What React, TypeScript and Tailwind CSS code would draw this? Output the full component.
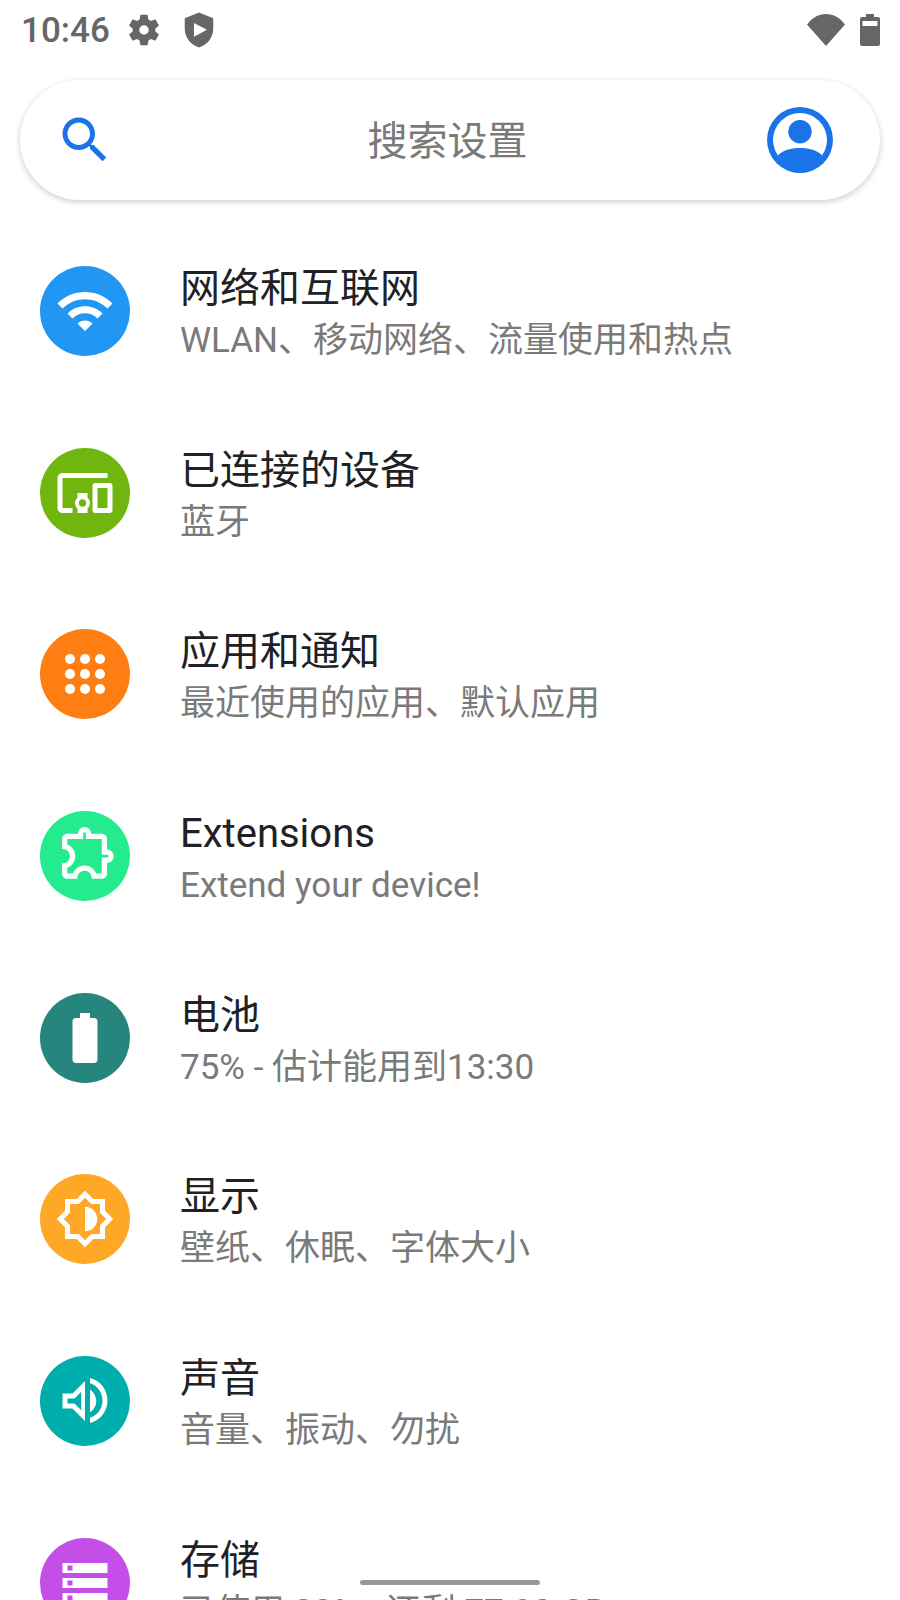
const FONT = "font-['Roboto','Noto_Sans_CJK_SC',sans-serif]";

const rows = [
  {
    title: '网络和互联网',
    sub: 'WLAN、移动网络、流量使用和热点',
    color: 'bg-[#2196f3]',
    icon: <path d="M1 9l2 2c4.97-4.97 13.03-4.97 18 0l2-2C16.93 2.93 7.08 2.93 1 9zm8 8l3 3 3-3c-1.65-1.66-4.34-1.66-6 0zm-4-4l2 2c2.76-2.76 7.24-2.76 10 0l2-2C15.14 9.14 8.87 9.14 5 13z" />,
  },
  {
    title: '已连接的设备',
    sub: '蓝牙',
    color: 'bg-[#70b60e]',
    icon: <path d="M3 6h18V4H3c-1.1 0-2 .9-2 2v12c0 1.1.9 2 2 2h4v-2H3V6zm10 6H9v1.78c-.61.55-1 1.33-1 2.22s.39 1.67 1 2.22V20h4v-1.78c.61-.55 1-1.34 1-2.22s-.39-1.67-1-2.22V12zm-2 5.5c-.83 0-1.5-.67-1.5-1.5s.67-1.5 1.5-1.5 1.5.67 1.5 1.5-.67 1.5-1.5 1.5zM22 8h-6c-.5 0-1 .5-1 1v10c0 .5.5 1 1 1h6c.5 0 1-.5 1-1V9c0-.5-.5-1-1-1zm-1 10h-4v-8h4v8z" />,
  },
  {
    title: '应用和通知',
    sub: '最近使用的应用、默认应用',
    color: 'bg-[#ff7e14]',
    icon: (
      <>
        {[6, 12, 18].map(y =>
          [6, 12, 18].map(x => <circle key={`${x}-${y}`} cx={x} cy={y} r="2" />)
        )}
      </>
    ),
  },
  {
    title: 'Extensions',
    sub: 'Extend your device!',
    color: 'bg-[#24ec8e]',
    icon: <path transform="translate(0.68 -2.25) scale(1.06)" d="M10.5 4.5c.28 0 .5.22.5.5v2h6v6h2c.28 0 .5.22.5.5s-.22.5-.5.5h-2v6h-2.12c-.68-1.75-2.39-3-4.38-3s-3.7 1.25-4.38 3H4v-2.12c1.75-.68 3-2.39 3-4.38 0-1.99-1.24-3.7-2.99-4.38L4 7h6V5c0-.28.22-.5.5-.5m0-2C9.12 2.5 8 3.62 8 5H4c-1.1 0-1.99.9-1.99 2v3.8h.29c1.49 0 2.7 1.21 2.7 2.7s-1.21 2.7-2.7 2.7H2V20c0 1.1.9 2 2 2h3.8v-.3c0-1.49 1.21-2.7 2.7-2.7s2.7 1.21 2.7 2.7v.3H17c1.1 0 2-.9 2-2v-4c1.38 0 2.5-1.12 2.5-2.5S20.38 11 19 11V7c0-1.1-.9-2-2-2h-4c0-1.38-1.12-2.5-2.5-2.5z" />,
  },
  {
    title: '电池',
    sub: '75% - 估计能用到13:30',
    color: 'bg-[#26867d]',
    icon: <path d="M15.67 4H14V2h-4v2H8.33C7.6 4 7 4.6 7 5.33v15.33C7 21.4 7.6 22 8.33 22h7.33c.74 0 1.34-.6 1.34-1.33V5.33C17 4.6 16.4 4 15.67 4z" />,
  },
  {
    title: '显示',
    sub: '壁纸、休眠、字体大小',
    color: 'bg-[#ffa726]',
    icon: <path d="M20 15.31L23.31 12 20 8.69V4h-4.69L12 .69 8.69 4H4v4.69L.69 12 4 15.31V20h4.69L12 23.31 15.31 20H20v-4.69zM18 14.48V18h-3.52L12 20.48 9.52 18H6v-3.52L3.52 12 6 9.52V6h3.52L12 3.52 14.48 6H18v3.52L20.48 12 18 14.48zM12 7.100v9.800c2.700 0 4.900-2.200 4.900-4.900s-2.200-4.900-4.900-4.900z" />,
  },
  {
    title: '声音',
    sub: '音量、振动、勿扰',
    color: 'bg-[#00adad]',
    icon: <path fillRule="evenodd" d="M3 9v6h4l5 5V4L7 9H3zm2 2h2.800L10.500 8.300v7.400L7.800 13H5v-2zM14 2.800v2.100c2.900.9 5 3.600 5 6.900s-2.100 6-5 6.900v2.100c4-.9 7-4.600 7-9s-3-8.100-7-9zm0 4.700v9c1.500-.8 2.500-2.700 2.500-4.500S15.500 8.300 14 7.500z" />,
  },
  {
    title: '存储',
    sub: '已使用 22% - 还剩 77.90 GB',
    color: 'bg-[#c44ee8]',
    icon: <path fillRule="evenodd" d="M3 4h18v4H3V4zm2 1v2h2V5H5zM3 10h18v4H3v-4zm2 1v2h2v-2H5zM3 16h18v4H3v-4zm2 1v2h2v-2H5z" />,
  },
];

export default function App() {
  return (
    <div className={`relative w-[900px] h-[1600px] overflow-hidden bg-white ${FONT}`}>
      {/* Status bar */}
      <div className="h-[60px] pl-[21px] pr-[20px] flex items-center text-[#666666]">
        <span className="text-[35px] leading-none w-[87px] font-medium">10:46</span>
        <svg viewBox="0 0 24 24" className="w-[38px] h-[38px] ml-[17px] fill-current">
          <path fillRule="evenodd" d="M19.140 12.940c.04-.3.06-.61.06-.94 0-.32-.02-.64-.07-.94l2.030-1.580a.49.49 0 0 0 .12-.61l-1.920-3.320a.488.488 0 0 0-.59-.22l-2.390.96c-.5-.38-1.030-.7-1.620-.94l-.36-2.540a.484.484 0 0 0-.48-.41h-3.840c-.24 0-.43.17-.47.41l-.36 2.540c-.59.24-1.130.57-1.620.94l-2.390-.96c-.22-.08-.47 0-.59.22L2.740 8.870c-.12.21-.08.47.12.61l2.030 1.580c-.05.3-.09.63-.09.94s.02.64.07.94l-2.030 1.580a.49.49 0 0 0-.12.61l1.920 3.320c.12.22.37.29.59.22l2.390-.96c.5.38 1.030.7 1.620.94l.36 2.540c.05.24.24.41.48.41h3.840c.24 0 .44-.17.47-.41l.36-2.540c.59-.24 1.130-.56 1.620-.94l2.390.96c.22.08.47 0 .59-.22l1.920-3.320c.12-.22.07-.47-.12-.61l-2.010-1.580zM12 15a3 3 0 1 1 0-6 3 3 0 0 1 0 6z" />
        </svg>
        <svg viewBox="0 0 24 24" className="w-[38px] h-[38px] ml-[17px] fill-current">
          <path fillRule="evenodd" d="M12 1L3 4.500v6.700c0 5.400 3.800 10.300 9 11.800 5.200-1.500 9-6.400 9-11.800V4.500L12 1zM8.800 7.500l8.200 4.400-8.200 4.400V7.500z" />
        </svg>
        <div className="flex-1" />
        <svg viewBox="0 0 38 32" className="w-[38px] h-[32px] fill-current">
          <path d="M19 32L0 10.500C5 4 11.500 0 19 0s14 4 19 10.500L19 32z" />
        </svg>
        <svg viewBox="0 0 20 32" className="w-[20px] h-[32px] ml-[15px] fill-current">
          <path fillRule="evenodd" d="M6 0h8v3h4c1.100 0 2 .9 2 2v25c0 1.100-.9 2-2 2H2c-1.100 0-2-.9-2-2V5c0-1.100.9-2 2-2h4V0zM2.500 7v5h15V7h-15z" />
        </svg>
      </div>

      {/* Search bar */}
      <div className="mx-[20px] mt-[20px] h-[120px] rounded-full bg-white shadow-[0_2px_6px_rgba(0,0,0,0.2)] flex items-center justify-between pl-[35px] pr-[47px]">
        <svg viewBox="0 0 24 24" className="w-[60px] h-[60px] fill-[#1a73e8]">
          <path d="M15.500 14h-.79l-.28-.27C15.410 12.590 16 11.110 16 9.500 16 5.910 13.090 3 9.500 3S3 5.910 3 9.500 5.910 16 9.500 16c1.610 0 3.090-.59 4.230-1.570l.27.28v.79l5 4.990L20.490 19l-4.990-5zm-6 0C7.010 14 5 11.990 5 9.500S7.010 5 9.500 5 14 7.010 14 9.500 11.990 14 9.500 14z" />
        </svg>
        <span className="text-[40px] leading-none text-[#7a7a7a] ml-[13px] mt-[4px]">搜索设置</span>
        <svg viewBox="0 0 66 66" className="w-[66px] h-[66px]">
          <circle cx="33" cy="33" r="33" fill="#1a73e8" />
          <circle cx="33" cy="33" r="27" fill="#fff" />
          <circle cx="33" cy="24.700" r="11.700" fill="#1a73e8" />
          <path d="M11 48c5-4.500 13-7 22-7s17 2.500 22 7c-5 10-14 18-22 18S16 58 11 48z" fill="#1a73e8" />
        </svg>
      </div>

      {/* Settings rows */}
      <div className="mt-[20.3px]">
        {rows.map(row => (
          <div key={row.title} className="h-[181.667px] flex items-center pl-[40px]">
            <div className={`w-[90px] h-[90px] shrink-0 rounded-full flex items-center justify-center ${row.color}`}>
              <svg viewBox="0 0 24 24" className="w-[60px] h-[60px] fill-white">
                {row.icon}
              </svg>
            </div>
            <div className="ml-[50px] pt-[6px] flex flex-col">
              <span className="text-[40px] leading-[54px] text-[#202124] whitespace-nowrap">{row.title}</span>
              <span className="text-[35px] leading-[50px] text-[#7a7a7a] whitespace-nowrap">{row.sub}</span>
            </div>
          </div>
        ))}
      </div>

      {/* Home indicator */}
      <div className="absolute left-[360px] top-[1580px] w-[180px] h-[5px] rounded-full bg-[#999999]" />
    </div>
  );
}
